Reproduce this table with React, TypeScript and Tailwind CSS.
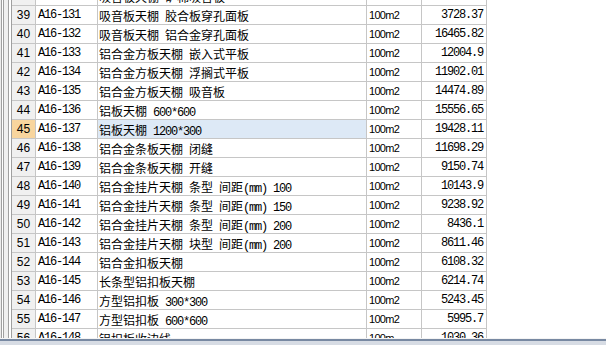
import React from "react";

type Row = { n: number; code: string; name: string; unit: string; value: string };

const rows: Row[] = [
  { n: 38, code: "A16-130", name: "吸音板天棚 矿棉吸音板", unit: "100m2", value: "3315.02" },
  { n: 39, code: "A16-131", name: "吸音板天棚 胶合板穿孔面板", unit: "100m2", value: "3728.37" },
  { n: 40, code: "A16-132", name: "吸音板天棚 铝合金穿孔面板", unit: "100m2", value: "16465.82" },
  { n: 41, code: "A16-133", name: "铝合金方板天棚 嵌入式平板", unit: "100m2", value: "12004.9" },
  { n: 42, code: "A16-134", name: "铝合金方板天棚 浮搁式平板", unit: "100m2", value: "11902.01" },
  { n: 43, code: "A16-135", name: "铝合金方板天棚 吸音板", unit: "100m2", value: "14474.89" },
  { n: 44, code: "A16-136", name: "铝板天棚 600*600", unit: "100m2", value: "15556.65" },
  { n: 45, code: "A16-137", name: "铝板天棚 1200*300", unit: "100m2", value: "19428.11" },
  { n: 46, code: "A16-138", name: "铝合金条板天棚 闭缝", unit: "100m2", value: "11698.29" },
  { n: 47, code: "A16-139", name: "铝合金条板天棚 开缝", unit: "100m2", value: "9150.74" },
  { n: 48, code: "A16-140", name: "铝合金挂片天棚 条型 间距(mm) 100", unit: "100m2", value: "10143.9" },
  { n: 49, code: "A16-141", name: "铝合金挂片天棚 条型 间距(mm) 150", unit: "100m2", value: "9238.92" },
  { n: 50, code: "A16-142", name: "铝合金挂片天棚 条型 间距(mm) 200", unit: "100m2", value: "8436.1" },
  { n: 51, code: "A16-143", name: "铝合金挂片天棚 块型 间距(mm) 200", unit: "100m2", value: "8611.46" },
  { n: 52, code: "A16-144", name: "铝合金扣板天棚", unit: "100m2", value: "6108.32" },
  { n: 53, code: "A16-145", name: "长条型铝扣板天棚", unit: "100m2", value: "6214.74" },
  { n: 54, code: "A16-146", name: "方型铝扣板 300*300", unit: "100m2", value: "5243.45" },
  { n: 55, code: "A16-147", name: "方型铝扣板 600*600", unit: "100m2", value: "5995.7" },
  { n: 56, code: "A16-148", name: "铝扣板收边线", unit: "100m", value: "1030.36" },
];

const MONO = "font-['Liberation_Mono',monospace] text-[12px] tracking-[-1.2px]";
const CJK = "font-['Noto_Sans_CJK_SC',sans-serif] text-[12px]";

function Mixed({ text }: { text: string }) {
  const parts = text.match(/[\x00-\x7f]+|[^\x00-\x7f]+/g) || [];
  return (
    <span className="whitespace-pre">
      {parts.map((p, i) =>
        /^[\x00-\x7f]+$/.test(p) ? (
          <span key={i} className={MONO}>
            {p}
          </span>
        ) : (
          <span key={i} className={CJK}>
            {p}
          </span>
        )
      )}
    </span>
  );
}

function LeftFrame() {
  return (
    <div className="flex h-full w-[12px] shrink-0">
      <div className="w-px bg-[#ececec]" />
      <div className="w-px bg-[#a0a0a0]" />
      <div className="w-px bg-white" />
      <div className="w-px bg-[#a0a0a0]" />
      <div className="w-[4px] bg-[#f0f0f0]" />
      <div className="w-px bg-[#a0a0a0]" />
      <div className="w-[2px] bg-white" />
      <div className="w-px bg-[#a0a0a0]" />
    </div>
  );
}

function TableRow({ r }: { r: Row }) {
  const sel = r.n === 45;
  const cell = "h-full flex items-center border-r border-b border-[#c6c6c6] text-black overflow-hidden";
  return (
    <div className="flex h-[19px]">
      <div
        className={`${cell} w-[24px] justify-center font-['Liberation_Sans',sans-serif] text-[12px] ${
          sel ? "bg-[#f8d59e]" : "bg-[#f0f0f0]"
        } border-[#bdbdbd]`}
      >
        {r.n}
      </div>
      <div className={`${cell} w-[62px] pl-[2px]`}>
        <span className={MONO}>{r.code}</span>
      </div>
      <div className={`${cell} w-[269px] pl-[1px] ${sel ? "bg-[#dde9f6]" : "bg-white"}`}>
        <Mixed text={r.name} />
      </div>
      <div className={`${cell} w-[55px] pl-[2px]`}>
        <span className="font-['Liberation_Sans',sans-serif] text-[11px] tracking-[-0.7px]">{r.unit}</span>
      </div>
      <div className={`${cell} w-[65px] pr-[3px] justify-end`}>
        <span className={MONO}>{r.value}</span>
      </div>
    </div>
  );
}

export default function App() {
  return (
    <div className="w-[606px] h-[345px] overflow-hidden bg-white flex flex-col">
      <div className="flex h-[338px] overflow-hidden shrink-0">
        <LeftFrame />
        <div className="flex-1 overflow-hidden">
          <div className="-mt-[13px]">
            {rows.map((r) => (
              <TableRow key={r.n} r={r} />
            ))}
          </div>
        </div>
      </div>
      <div className="h-px bg-[#f4f4f4]" />
      <div className="h-[2px] bg-[#7889a2]" />
      <div className="flex-1 bg-[#d7dce4]" />
    </div>
  );
}
